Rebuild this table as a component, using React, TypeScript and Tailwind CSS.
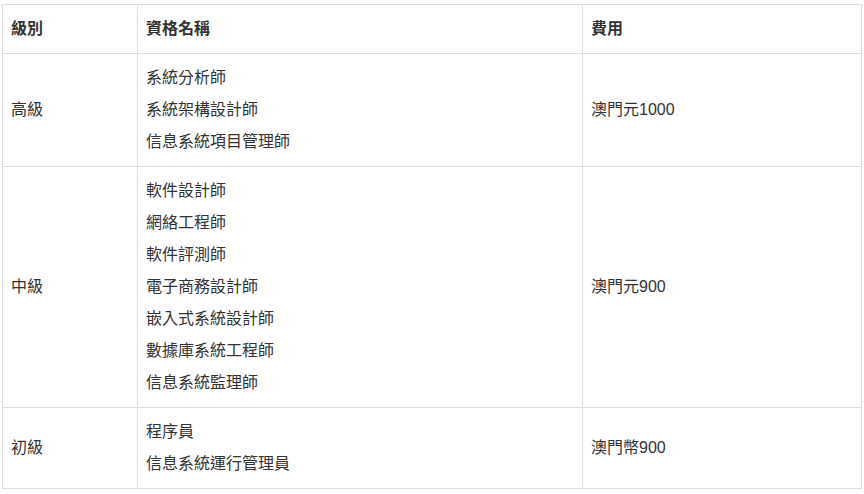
import React from "react";

const rows = [
  { level: "高級", names: ["系統分析師", "系統架構設計師", "信息系統項目管理師"], fee: "澳門元1000" },
  {
    level: "中級",
    names: ["軟件設計師", "網絡工程師", "軟件評測師", "電子商務設計師", "嵌入式系統設計師", "數據庫系統工程師", "信息系統監理師"],
    fee: "澳門元900",
  },
  { level: "初級", names: ["程序員", "信息系統運行管理員"], fee: "澳門幣900" },
];

export default function App() {
  return (
    <div className="min-h-[494px] w-[864px] bg-white pl-[2px] pt-[4px] text-[16px] leading-[32px] text-[#333333] [font-family:'Liberation_Sans','Noto_Sans_CJK_TC',sans-serif]">
      <table className="w-[860px] table-fixed border-collapse border border-[#dddddd]">
        <colgroup>
          <col className="w-[135px]" />
          <col className="w-[445px]" />
          <col />
        </colgroup>
        <thead>
          <tr>
            <th className="border border-[#dddddd] p-2 text-left font-bold">級別</th>
            <th className="border border-[#dddddd] p-2 text-left font-bold">資格名稱</th>
            <th className="border border-[#dddddd] p-2 text-left font-bold">費用</th>
          </tr>
        </thead>
        <tbody>
          {rows.map((r) => (
            <tr key={r.level}>
              <td className="border border-[#dddddd] p-2 align-middle">{r.level}</td>
              <td className="border border-[#dddddd] p-2 align-middle">
                {r.names.map((n) => (
                  <div key={n}>{n}</div>
                ))}
              </td>
              <td className="border border-[#dddddd] p-2 align-middle">{r.fee}</td>
            </tr>
          ))}
        </tbody>
      </table>
    </div>
  );
}
